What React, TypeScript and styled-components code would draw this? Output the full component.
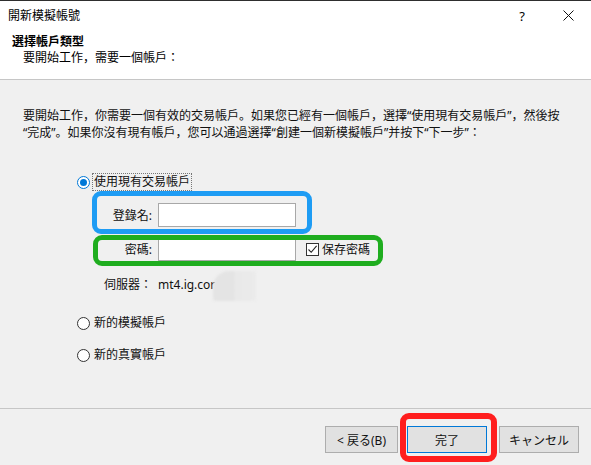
import React from 'react';
import styled, { createGlobalStyle } from 'styled-components';

const GlobalStyle = createGlobalStyle`
  html, body {
    margin: 0;
    padding: 0;
    background: #f0f0f0;
  }
  body {
    font-family: "Noto Sans", "Noto Sans CJK JP", sans-serif;
    font-size: 12px;
    color: #111;
    text-spacing-trim: space-all;
  }
  * {
    box-sizing: border-box;
  }
`;

const Window = styled.div`
  position: relative;
  width: 591px;
  height: 465px;
  display: flex;
  flex-direction: column;
  overflow: hidden;
  background: #f0f0f0;
`;

const TitleBar = styled.div`
  height: 30px;
  flex: none;
  display: flex;
  align-items: center;
  background: #fff;
  border-top: 1px solid #2e2e2e;
  padding-left: 8px;
`;

const TitleText = styled.div`
  flex: 1;
  font-size: 12px;
  line-height: 16px;
  color: #000;
`;

const TitleButton = styled.div`
  width: 46px;
  height: 29px;
  display: flex;
  align-items: center;
  justify-content: center;
  font-size: 13px;
  color: #000;
`;

const Header = styled.div`
  height: 50px;
  flex: none;
  background: #fff;
  padding: 4px 0 0 12px;
  border-bottom: 1px solid #c6c6c6;
`;

const HeaderTitle = styled.div`
  font-weight: 700;
  line-height: 16px;
  color: #000;
`;

const HeaderSub = styled.div`
  padding-left: 11px;
  line-height: 16px;
  color: #000;
`;

const Body = styled.div`
  flex: 1;
  padding: 27px 0 0 23px;
`;

const Intro = styled.p`
  margin: 0;
  line-height: 17px;
  white-space: nowrap;
  color: #111;
`;

const Options = styled.div`
  margin: 32px 0 0 54px;
  display: flex;
  flex-direction: column;
`;

const RadioRow = styled.div<{ $gap?: number }>`
  height: 18px;
  display: flex;
  align-items: center;
  margin-top: ${(p) => p.$gap ?? 0}px;
`;

const Radio = styled.span<{ $checked?: boolean }>`
  width: 13px;
  height: 13px;
  border-radius: 50%;
  flex: none;
  background: #fff;
  border: 1px solid ${(p) => (p.$checked ? '#0078d7' : '#333')};
  display: flex;
  align-items: center;
  justify-content: center;

  &::after {
    content: '';
    display: ${(p) => (p.$checked ? 'block' : 'none')};
    width: 7px;
    height: 7px;
    border-radius: 50%;
    background: #0078d7;
  }
`;

const RadioLabel = styled.span<{ $focused?: boolean }>`
  margin-left: 2px;
  height: 18px;
  padding: 0 1px;
  line-height: 16px;
  border: 1px dotted ${(p) => (p.$focused ? '#777' : 'transparent')};
  color: #111;
`;

const Form = styled.div`
  margin-left: 16px;
  display: grid;
  grid-template-columns: 59px 138px auto;
  column-gap: 6px;
  align-items: center;
`;

const FieldLabel = styled.div<{ $top: number }>`
  grid-column: 1;
  text-align: right;
  margin-top: ${(p) => p.$top}px;
  line-height: 17px;
  color: #111;
`;

const TextInput = styled.div<{ $top: number }>`
  grid-column: 2;
  height: 24px;
  margin-top: ${(p) => p.$top}px;
  background: #fff;
  border: 1px solid #a8a8a8;
`;

const ServerValue = styled.div<{ $top: number }>`
  grid-column: 2;
  height: 24px;
  margin-top: ${(p) => p.$top}px;
  display: flex;
  align-items: center;
  font-size: 12px;
  color: #111;
`;

const SaveCheck = styled.label`
  grid-column: 3;
  margin-top: 10px;
  display: flex;
  align-items: center;
  gap: 3px;
  padding-left: 4px;
  color: #111;
  line-height: 17px;
`;

const CheckBox = styled.span`
  width: 13px;
  height: 13px;
  flex: none;
  background: #fff;
  border: 1px solid #333;
  display: flex;
  align-items: center;
  justify-content: center;
`;

const Footer = styled.div`
  height: 57px;
  flex: none;
  border-top: 1px solid #c6c6c6;
  display: flex;
  justify-content: flex-end;
  align-items: flex-start;
  padding: 17px 12px 0 0;
`;

const Button = styled.div<{ $width: number; $primary?: boolean; $gap?: number }>`
  width: ${(p) => p.$width}px;
  height: 27px;
  margin-left: ${(p) => p.$gap ?? 0}px;
  display: flex;
  align-items: center;
  justify-content: center;
  background: #e1e1e1;
  border: 1px solid ${(p) => (p.$primary ? '#0078d7' : '#adadad')};
  font-size: 12px;
  color: #111;
`;

// annotation frames drawn over the screenshot
const Marker = styled.div<{ $color: string; $x: number; $y: number; $w: number; $h: number; $stroke: number }>`
  position: absolute;
  left: ${(p) => p.$x}px;
  top: ${(p) => p.$y}px;
  width: ${(p) => p.$w}px;
  height: ${(p) => p.$h}px;
  border: ${(p) => p.$stroke}px solid ${(p) => p.$color};
  border-radius: 9px;
  pointer-events: none;
`;

const Smudge = styled.div`
  position: absolute;
  left: 213px;
  top: 271px;
  width: 43px;
  height: 30px;
  border-radius: 16px 3px 3px 3px;
  background: linear-gradient(90deg, #e4e4e4 0%, #e4e4e4 48%, #e9e9e9 52%, #ebebeb 100%);
  filter: blur(0.8px);
`;

const App = () => {
  return (
    <>
      <GlobalStyle />
      <Window>
        <TitleBar>
          <TitleText>開新模擬帳號</TitleText>
          <TitleButton>?</TitleButton>
          <TitleButton>
            <svg width="11" height="11" viewBox="0 0 11 11">
              <path d="M0.5 0.5 L10.5 10.5 M10.5 0.5 L0.5 10.5" stroke="#111" strokeWidth="1" />
            </svg>
          </TitleButton>
        </TitleBar>
        <Header>
          <HeaderTitle>選擇帳戶類型</HeaderTitle>
          <HeaderSub>要開始工作，需要一個帳戶：</HeaderSub>
        </Header>
        <Body>
          <Intro>
            要開始工作，你需要一個有效的交易帳戶。如果您已經有一個帳戶，選擇“使用現有交易帳戶”，然後按
            <br />
            “完成”。如果你沒有現有帳戶，您可以通過選擇“創建一個新模擬帳戶”并按下“下一步”：
          </Intro>
          <Options>
            <RadioRow>
              <Radio $checked />
              <RadioLabel $focused>使用現有交易帳戶</RadioLabel>
            </RadioRow>
            <Form>
              <FieldLabel $top={12}>登錄名:</FieldLabel>
              <TextInput $top={12} />
              <FieldLabel $top={10}>密碼:</FieldLabel>
              <TextInput $top={10} />
              <SaveCheck>
                <CheckBox>
                  <svg width="11" height="11" viewBox="0 0 11 11">
                    <path d="M1.5 5.5 L4.2 8.3 L9.6 1.8" fill="none" stroke="#222" strokeWidth="1.1" />
                  </svg>
                </CheckBox>
                保存密碼
              </SaveCheck>
              <FieldLabel $top={11}>伺服器：</FieldLabel>
              <ServerValue $top={11}>mt4.ig.cor</ServerValue>
            </Form>
            <RadioRow $gap={18}>
              <Radio />
              <RadioLabel>新的模擬帳戶</RadioLabel>
            </RadioRow>
            <RadioRow $gap={14}>
              <Radio />
              <RadioLabel>新的真實帳戶</RadioLabel>
            </RadioRow>
          </Options>
        </Body>
        <Footer>
          <Button $width={73}>&lt; 戻る(B)</Button>
          <Button $width={80} $primary $gap={9}>完了</Button>
          <Button $width={80} $gap={12}>キャンセル</Button>
        </Footer>
        <Smudge />
        <Marker $color="#1e9cf4" $x={92} $y={191} $w={220} $h={43} $stroke={5} />
        <Marker $color="#1fad1f" $x={93} $y={235} $w={290} $h={31} $stroke={5} />
        <Marker $color="#ff1e1e" $x={400} $y={413} $w={97} $h={49} $stroke={6} />
      </Window>
    </>
  );
};

export default App;
